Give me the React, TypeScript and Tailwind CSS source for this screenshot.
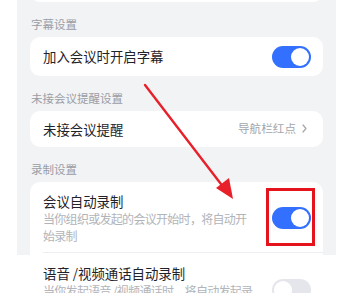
import React from 'react';

function Toggle({ on }: { on: boolean }) {
    return (
        <div className={`w-[39px] h-[22px] rounded-full p-[2px] flex items-center shrink-0 ${on ? 'bg-[#3370ff] justify-end' : 'bg-[#e5e6eb] justify-start'}`}>
            <div className="w-[18px] h-[18px] rounded-full bg-white" />
        </div>
    );
}

function Label({ children }: { children: React.ReactNode }) {
    return (
        <div className="pt-[14px] pb-[4px] pl-[1px] text-[11.5px] leading-[17px] text-[#9a9ea5]">{children}</div>
    );
}

export default function App() {
    return (
        <div className="relative w-[350px] h-[293px] bg-white overflow-hidden font-['Noto_Sans_CJK_SC','Noto_Sans',sans-serif]">
            <div className="mx-[17px] w-[319px] h-full bg-[#f2f3f5] px-[13px]">
                {/* card cut off at the top */}
                <div className="h-[40px] -mt-[38px] bg-white rounded-[10px]" />

                <Label>字幕设置</Label>
                <div className="h-[39px] bg-white rounded-[10px] flex items-center justify-between pl-[13px] pr-[12px]">
                    <span className="text-[13.4px] text-[#1f2329]">加入会议时开启字幕</span>
                    <Toggle on />
                </div>

                <Label>未接会议提醒设置</Label>
                <div className="h-[36px] bg-white rounded-[10px] flex items-center justify-between pl-[13px] pr-[16px]">
                    <span className="text-[13.4px] text-[#1f2329]">未接会议提醒</span>
                    <div className="flex items-center gap-[6px] text-[11.6px] text-[#a3a6ab]">
                        <span>导航栏红点</span>
                        <svg width="5" height="9" viewBox="0 0 5 9" fill="none">
                            <path d="M1 1l3 3.5L1 8" stroke="#a3a6ab" strokeWidth="1.2" strokeLinecap="round" strokeLinejoin="round" />
                        </svg>
                    </div>
                </div>

                <Label>录制设置</Label>
                <div className="bg-white rounded-[10px] pl-[13px]">
                    <div className="flex items-center justify-between gap-[8px] pr-[12px] pt-[10px] pb-[8px] border-b border-[#eceef1]">
                        <div className="min-w-0">
                            <div className="text-[13.4px] leading-[18px] text-[#1f2329]">会议自动录制</div>
                            <div className="text-[12px] leading-[17px] tracking-[-0.7px] text-[#b1b4b9] whitespace-nowrap">
                                当你组织或发起的会议开始时，将自动开<br />始录制
                            </div>
                        </div>
                        <Toggle on />
                    </div>
                    <div className="flex items-center justify-between gap-[8px] pr-[12px] pt-[11px] pb-[8px]">
                        <div className="min-w-0">
                            <div className="text-[13.4px] leading-[18px] text-[#1f2329]">语音 /视频通话自动录制</div>
                            <div className="text-[12px] leading-[17px] tracking-[-0.7px] text-[#b1b4b9] whitespace-nowrap">
                                当你发起语音 /视频通话时，将自动发起录<br />制
                            </div>
                        </div>
                        <Toggle on={false} />
                    </div>
                </div>
            </div>

            {/* annotation: arrow and box */}
            <svg className="absolute left-0 top-0 pointer-events-none" width="350" height="293" viewBox="0 0 350 293">
                <line x1="145" y1="85" x2="224" y2="188" stroke="#e8202a" strokeWidth="2.4" strokeLinecap="round" />
                <polygon points="233,199 216,188 229,178" fill="#e8202a" />
            </svg>
            <div className="absolute left-[266px] top-[188px] w-[49px] h-[58px] border-[3px] border-[#e5141c]" />
        </div>
    );
}
